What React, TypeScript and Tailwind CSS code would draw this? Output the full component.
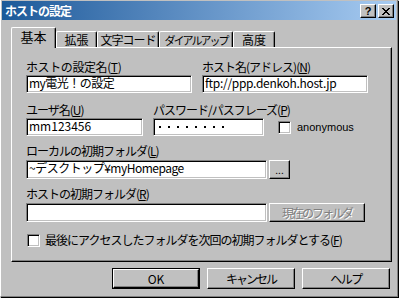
const field =
  "bg-white border border-t-[#808080] border-l-[#808080] border-r-white border-b-white shadow-[inset_1px_1px_0_#000,inset_-1px_-1px_0_#c0c0c0]"
const raised =
  "bg-[#c0c0c0] border border-t-white border-l-white border-r-black border-b-black shadow-[inset_-1px_-1px_0_#808080]"

function Key({ k }: { k: string }) {
  return (
    <span>
      (<span className="underline">{k}</span>)
    </span>
  )
}

function Check() {
  return <div className={`h-[13px] w-[13px] shrink-0 ${field}`} />
}

function Tab({ label, width, text, active }: { label: string; width: string; text: string; active?: boolean }) {
  if (active) {
    return (
      <div
        className={`${width} ${text} relative z-10 -mb-[1px] flex h-[21px] items-start justify-center whitespace-nowrap rounded-tl-[2px] rounded-tr-[2px] border-l border-t border-r border-l-white border-t-white border-r-black bg-[#c0c0c0] pt-[2px] shadow-[inset_-1px_0_0_#808080]`}
      >
        {label}
      </div>
    )
  }
  return (
    <div
      className={`${width} ${text} flex h-[16px] items-center justify-center whitespace-nowrap rounded-tl-[2px] rounded-tr-[2px] border-l border-t border-r border-l-white border-t-white border-r-black bg-[#c0c0c0] leading-[14px] shadow-[inset_-1px_0_0_#808080]`}
    >
      {label}
    </div>
  )
}

export default function App() {
  return (
    <div className="relative h-[298px] w-[399px] overflow-hidden whitespace-nowrap bg-[#c0c0c0] font-['Noto_Sans_CJK_JP',sans-serif] text-[12px] leading-[14px] tracking-[-1px] text-black">
      <div className="flex h-[297px] w-[398px] flex-col border-r border-b border-l border-r-[#808080] border-b-[#808080] border-l-white pl-[1px] pt-[1px] shadow-[1px_1px_0_#000]">
        {/* title bar */}
        <div className="flex h-[19px] w-[394px] items-center justify-between bg-gradient-to-r from-[#1a5a9a] to-[#a8ccf2] pl-[3px] pr-[2px]">
          <span className="text-[12px] font-bold text-white">ホストの設定</span>
          <div className="flex gap-[2px] pt-[1px] tracking-normal">
            <div className={`flex h-[14px] w-[16px] items-center justify-center font-['Liberation_Sans',sans-serif] text-[11px] font-bold leading-none ${raised}`}>?</div>
            <div className={`flex h-[14px] w-[16px] items-center justify-center ${raised}`}>
              <svg width="8" height="7" viewBox="0 0 8 7">
                <path d="M0 0 L7 7 M1 0 L8 7 M7 0 L0 7 M8 0 L1 7" stroke="#000" strokeWidth="1" />
              </svg>
            </div>
          </div>
        </div>

        {/* tabs */}
        <div className="ml-[9px] mt-[7px] flex items-end">
          <Tab label="基本" width="w-[45px]" text="text-[13px] tracking-normal" active />
          <Tab label="拡張" width="w-[41px]" text="text-[12px] tracking-normal" />
          <Tab label="文字コード" width="w-[62px]" text="text-[12px] tracking-[-1px]" />
          <Tab label="ダイアルアップ" width="w-[74px]" text="text-[11px] tracking-[-2px]" />
          <Tab label="高度" width="w-[42px]" text="text-[12px] tracking-normal" />
        </div>

        {/* panel */}
        <div className={`ml-[9px] h-[215px] w-[381px] pl-[14px] pt-[12px] ${raised}`}>
          <div className="flex gap-[10px]">
            <div className="w-[166px]">
              <div className="tracking-[-0.4px]">
                ホストの設定名<Key k="T" />
              </div>
              <div className={`mt-[1px] h-[18px] px-[2px] tracking-[-0.5px] ${field}`}>my電光！の設定</div>
            </div>
            <div className="w-[166px]">
              <div>
                ホスト名(アドレス)<Key k="N" />
              </div>
              <div className={`mt-[1px] h-[18px] px-[2px] tracking-[-0.3px] ${field}`}>ftp://ppp.denkoh.host.jp</div>
            </div>
          </div>

          <div className="mt-[10px] flex items-end">
            <div className="w-[117px]">
              <div>
                ユーザ名<Key k="U" />
              </div>
              <div className={`mt-[1px] h-[18px] px-[2px] tracking-normal ${field}`}>mm123456</div>
            </div>
            <div className="ml-[10px] w-[111px]">
              <div>
                パスワード/パスフレーズ<Key k="P" />
              </div>
              <div className={`mt-[1px] flex h-[18px] items-center gap-[7px] px-[5px] ${field}`}>
                {[0, 1, 2, 3, 4, 5, 6, 7].map((i) => (
                  <span key={i} className="h-[2px] w-[2px] bg-black" />
                ))}
              </div>
            </div>
            <div className="mb-[2px] ml-[14px] flex items-center gap-[6px]">
              <Check />
              <span className="font-['Liberation_Sans',sans-serif] text-[11px] tracking-normal">anonymous</span>
            </div>
          </div>

          <div className="mt-[8px]">
            ローカルの初期フォルダ<Key k="L" />
          </div>
          <div className="mt-[2px] flex gap-[2px]">
            <div className={`h-[19px] w-[241px] px-[2px] tracking-[-0.5px] ${field}`}>~デスクトップ¥myHomepage</div>
            <div className={`flex h-[19px] w-[21px] items-end justify-center pb-[3px] text-[10px] leading-none tracking-normal ${raised}`}>...</div>
          </div>

          <div className="mt-[8px]">
            ホストの初期フォルダ<Key k="R" />
          </div>
          <div className="mt-[2px] flex gap-[2px]">
            <div className={`h-[19px] w-[241px] ${field}`} />
            <div className={`flex h-[19px] w-[96px] items-center justify-center text-[12px] tracking-[-2px] text-[#808080] [text-shadow:1px_1px_0_#fff] ${raised}`}>
              現在のフォルダ
            </div>
          </div>

          <div className="mt-[11px] flex items-center gap-[5px] pl-[1px]">
            <Check />
            <span>
              最後にアクセスしたフォルダを次回の初期フォルダとする<Key k="F" />
            </span>
          </div>
        </div>

        {/* buttons */}
        <div className="ml-[110px] mt-[6px] flex gap-[7px]">
          <div className="border border-black">
            <div className={`flex h-[19px] w-[86px] items-center justify-center tracking-normal ${raised}`}>OK</div>
          </div>
          <div className={`flex h-[21px] w-[88px] items-center justify-center text-[12px] tracking-[-2px] ${raised}`}>キャンセル</div>
          <div className={`flex h-[21px] w-[88px] items-center justify-center text-[12px] tracking-[-1.5px] ${raised}`}>ヘルプ</div>
        </div>
      </div>
    </div>
  )
}
